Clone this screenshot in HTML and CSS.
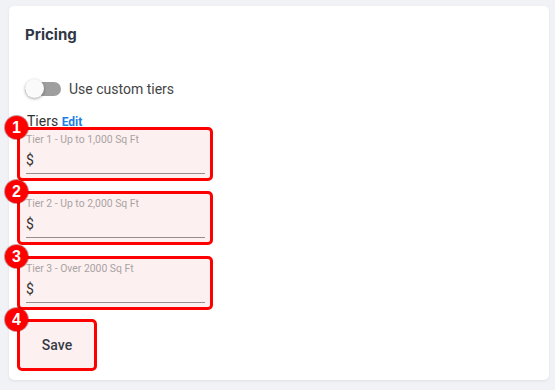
FILE: index.html
```html
<!DOCTYPE html>
<html lang="en">
  <head>
    <meta charset="UTF-8" />
    <meta name="viewport" content="width=device-width, initial-scale=1.0" />
    <title>Pricing</title>
    <link rel="stylesheet" href="styles.css">
  </head>
  <body>
    <section class="card">
      <h2 class="card-title">Pricing</h2>

      <!-- toggle -->
      <label class="switch-row">
        <span class="switch">
          <span class="switch-track"></span>
          <span class="switch-thumb"></span>
        </span>
        <span class="switch-label">Use custom tiers</span>
      </label>

      <div class="tiers-label">Tiers <a class="edit-link" href="#">Edit</a></div>

      <div class="field">
        <span class="badge">1</span>
        <div class="field-label">Tier 1 - Up to 1,000 Sq Ft</div>
        <div class="field-input">$</div>
      </div>

      <div class="field">
        <span class="badge">2</span>
        <div class="field-label">Tier 2 - Up to 2,000 Sq Ft</div>
        <div class="field-input">$</div>
      </div>

      <div class="field">
        <span class="badge">3</span>
        <div class="field-label">Tier 3 - Over 2000 Sq Ft</div>
        <div class="field-input">$</div>
      </div>

      <button class="save-btn">
        <span class="badge">4</span>
        Save
      </button>
    </section>
  </body>
</html>
```

FILE: styles.css
```css
body {
  margin: 0;
  padding: 6px 6px 10px 9px;
  background: #f1f2f6;
  font-family: Roboto, "Liberation Sans", sans-serif;
}

.card {
  height: 374px;
  box-sizing: border-box;
  padding: 19px 16px 0;
  background: #fff;
  border-radius: 5px;
  box-shadow: 0 1px 3px rgba(0, 0, 0, 0.08);
}

.card-title {
  margin: 0;
  font-family: Inter, Roboto, sans-serif;
  font-size: 15px;
  font-weight: 700;
  line-height: 20px;
  color: #2f3745;
}

/* toggle */
.switch-row {
  display: flex;
  align-items: center;
  gap: 8px;
  margin-top: 34px;
  height: 20px;
}

.switch {
  position: relative;
  width: 36px;
  height: 20px;
}

.switch-track {
  position: absolute;
  left: 0;
  right: 0;
  top: 3px;
  height: 14px;
  border-radius: 7px;
  background: #9e9e9e;
}

.switch-thumb {
  position: absolute;
  left: 0;
  top: 0;
  width: 19px;
  height: 19px;
  border-radius: 50%;
  background: #fafafa;
  box-shadow: 0 1px 3px rgba(0, 0, 0, 0.35);
}

.switch-label {
  font-size: 14px;
  color: #444;
}

/* tiers */
.tiers-label {
  margin: 15px 0 -2px 2px;
  font-size: 14px;
  line-height: 14px;
  color: #333;
}

.edit-link {
  font-size: 12px;
  font-weight: 700;
  color: #1b7fe3;
  text-decoration: none;
}

.field {
  position: relative;
  width: 196px;
  height: 54px;
  box-sizing: border-box;
  margin: 0 0 10px -8px;
  padding: 4px 5px 0 6px;
  border: 3px solid #ff0000;
  border-radius: 5px;
  background: #fdf0f0;
}

.field + .field + .field {
  margin-top: 11px;
}

.field-label {
  font-size: 10.4px;
  line-height: 12px;
  color: #a8a3a3;
}

.field-input {
  height: 23px;
  padding-top: 4px;
  font-size: 14px;
  line-height: 20px;
  color: #333;
  border-bottom: 1px solid #9a8c8c;
}

.save-btn {
  position: relative;
  display: block;
  width: 80px;
  height: 52px;
  margin: -1px 0 0 -8px;
  border: 3px solid #ff0000;
  border-radius: 5px;
  background: #fdf0f0;
  font-family: Roboto, sans-serif;
  font-size: 14px;
  font-weight: 500;
  color: #353b47;
  cursor: pointer;
}

.badge {
  position: absolute;
  left: -15px;
  top: -14px;
  width: 23px;
  height: 23px;
  border-radius: 50%;
  background: #f00;
  box-shadow: 0 0 0 1px rgba(120, 0, 0, 0.4);
  color: #fff;
  font-family: "Liberation Sans", Arial, sans-serif;
  font-size: 16px;
  font-weight: 700;
  line-height: 23px;
  text-align: center;
}
```
